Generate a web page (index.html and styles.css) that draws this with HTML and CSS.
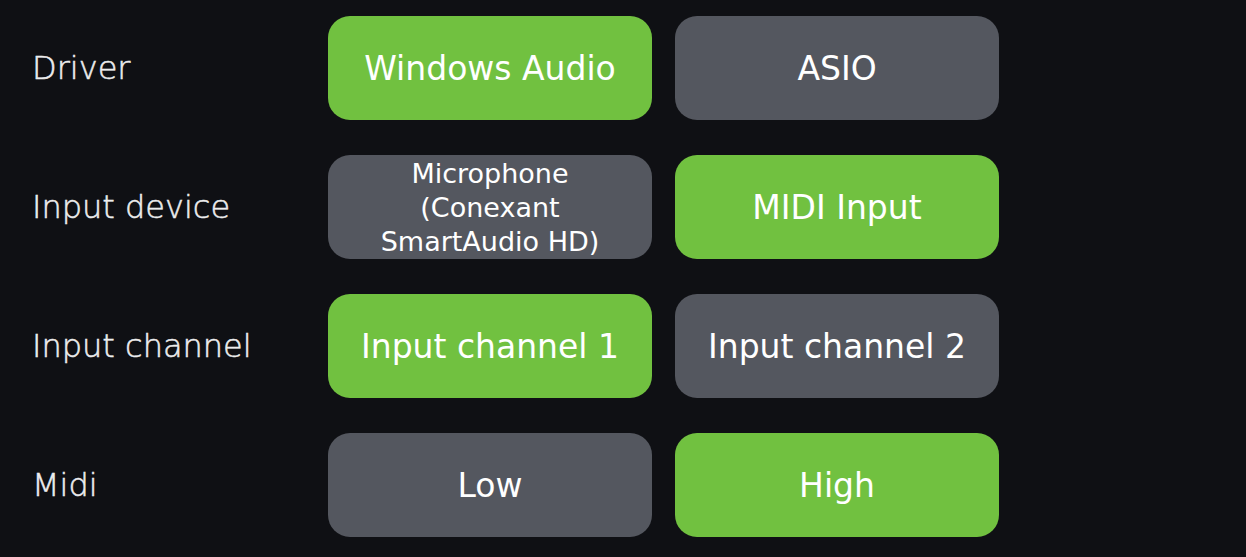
FILE: index.html
```html
<!DOCTYPE html>
<html lang="en">
<head>
<meta charset="utf-8">
<title>Audio settings</title>
<link rel="stylesheet" href="styles.css">
</head>
<body>
<main class="settings">
  <div class="label">Driver</div>
  <button class="opt on">Windows Audio</button>
  <button class="opt">ASIO</button>

  <div class="label">Input device</div>
  <button class="opt small">Microphone (Conexant SmartAudio HD)</button>
  <button class="opt on">MIDI Input</button>

  <div class="label">Input channel</div>
  <button class="opt on">Input channel 1</button>
  <button class="opt">Input channel 2</button>

  <div class="label">Midi</div>
  <button class="opt">Low</button>
  <button class="opt on">High</button>
</main>
</body>
</html>
```
FILE: styles.css
```css
html, body {
  margin: 0;
  height: 100%;
}
body {
  background: #0f1014;
  font-family: "DejaVu Sans", "Open Sans", sans-serif;
}
.settings {
  display: grid;
  grid-template-columns: 273px 324px 324px;
  grid-auto-rows: 104px;
  column-gap: 23px;
  row-gap: 35px;
  padding: 16px 0 0 32px;
  align-items: center;
}
.label {
  color: #ededee;
  font-size: 32px;
  font-weight: 200;
  -webkit-text-stroke: 0.5px #ededee;
  white-space: nowrap;
}
.opt {
  height: 100%;
  border: 0;
  border-radius: 22px;
  background: #54575f;
  color: #ffffff;
  font-family: inherit;
  font-size: 33px;
  font-weight: 400;
  padding: 0 24px;
  display: flex;
  align-items: center;
  justify-content: center;
  text-align: center;
  cursor: pointer;
}
.opt.on {
  background: #71c140;
}
.opt.small {
  font-size: 27px;
  line-height: 34px;
  padding-top: 2px;
}
```
